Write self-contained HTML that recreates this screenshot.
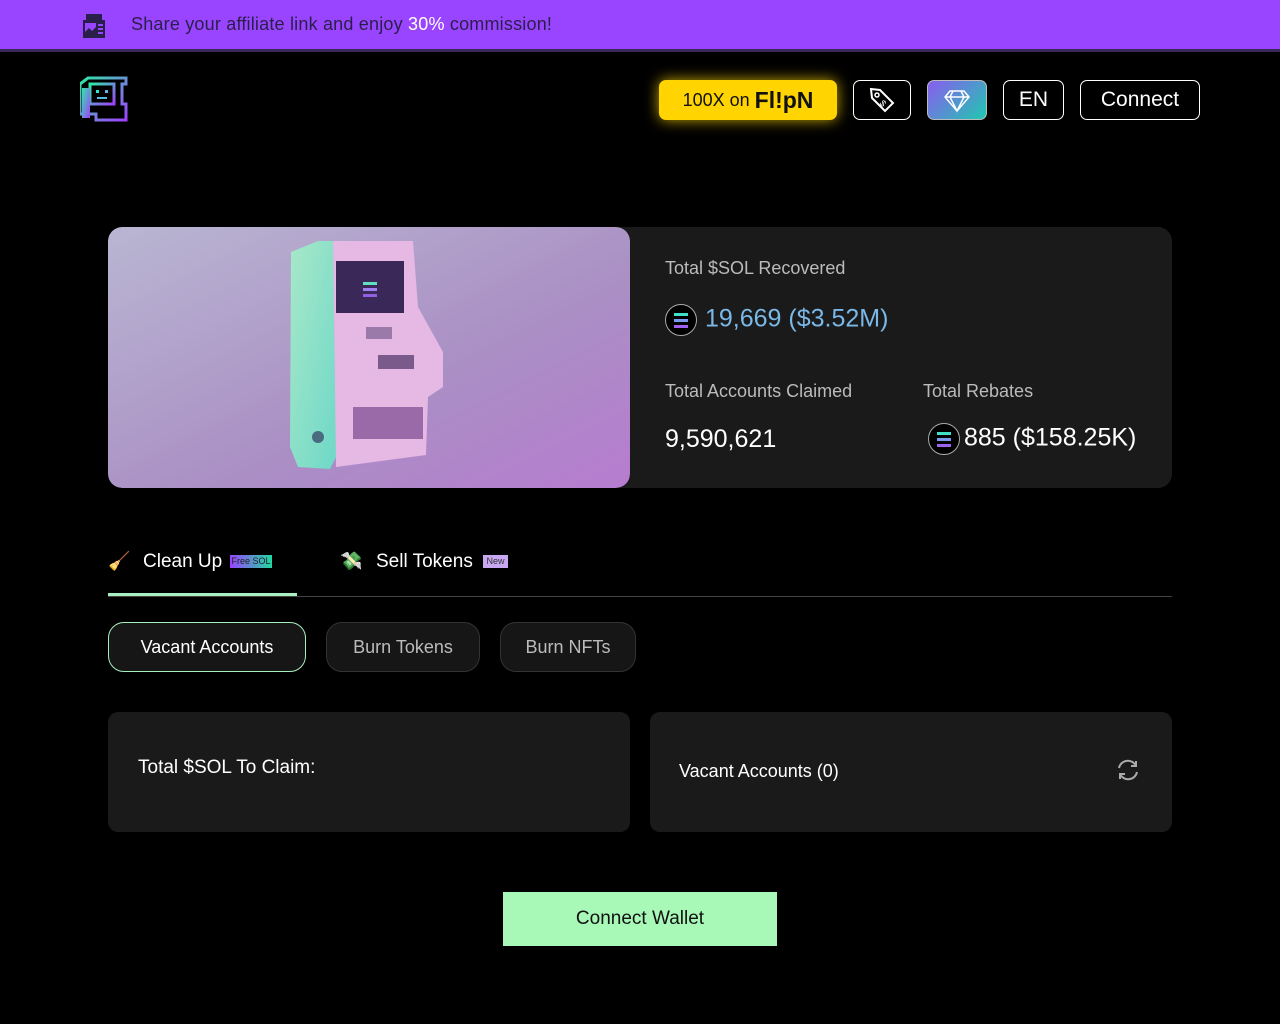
<!DOCTYPE html>
<html><head><meta charset="utf-8"><style>
*{margin:0;padding:0;box-sizing:border-box}
body{width:1280px;height:1024px;background:#000;color:#fff;font-family:"Liberation Sans",sans-serif;position:relative;overflow:hidden}
.abs{position:absolute}
.banner{left:0;top:0;width:1280px;height:52px;background:#9945ff;border-bottom:3px solid #3a2a5a}
.banner span.t{position:absolute;left:131px;top:14px;font-size:18px;color:#2a1f4a;letter-spacing:0.2px}
.btn{position:absolute;top:80px;height:40px;border:1.5px solid #fff;border-radius:7px;display:flex;align-items:center;justify-content:center;font-size:21px}
.card{background:#1a1a1a;border-radius:14px}
.lbl{font-size:18px;color:#bbb}
.pill{position:absolute;top:622px;height:50px;border-radius:16px;background:#161616;border:1px solid #333;display:flex;align-items:center;justify-content:center;font-size:18px;color:#bbb}
.sol{display:inline-block;width:32px;height:32px;border-radius:50%;background:#000;border:1.5px solid #aaa;position:relative;vertical-align:middle}
.sol::before{content:"";position:absolute;left:8px;top:8px;width:14px;height:3px;background:#40e0c8;box-shadow:0 6px 0 #7a9af0,0 12px 0 #a060f0}
</style></head><body>
<div class="abs banner">
<svg class="abs" style="left:80px;top:12px" width="28" height="28" viewBox="0 0 28 28"><rect x="3" y="8" width="22" height="18" fill="#2a1f4a"/><rect x="6" y="2" width="16" height="7" fill="#2a1f4a"/><rect x="5" y="11" width="11" height="12" fill="#9945ff"/><path d="M5 20 L9 16 L12 19 L16 15 L16 23 L5 23Z" fill="#2a1f4a"/><rect x="18" y="12" width="5" height="2" fill="#9945ff"/><rect x="18" y="16" width="5" height="2" fill="#9945ff"/><rect x="18" y="20" width="5" height="2" fill="#9945ff"/></svg>
<span class="t">Share your affiliate link and enjoy <span style="color:#fff">30%</span> commission!</span>
</div>
<svg class="abs" style="left:80px;top:74px" width="48" height="48" viewBox="0 0 48 48"><defs><linearGradient id="lg" x1="0" y1="0" x2="1" y2="1"><stop offset="0" stop-color="#2ee8a8"/><stop offset="1" stop-color="#a040ff"/></linearGradient></defs><path d="M8 4h38v6h-4v20h4v16h-30v-6h-16v-30z" fill="none" stroke="url(#lg)" stroke-width="3"/><rect x="10" y="10" width="24" height="20" fill="none" stroke="url(#lg)" stroke-width="3"/><rect x="2" y="14" width="8" height="30" fill="url(#lg)"/><rect x="16" y="16" width="3" height="3" fill="#2ee8c8"/><rect x="25" y="16" width="3" height="3" fill="#6ab0f0"/><rect x="17" y="23" width="10" height="2" fill="#5ab8e8"/></svg>

<div class="btn" style="left:659px;width:178px;background:#ffd400;border-color:#ffd400;color:#111;box-shadow:0 0 14px #c9a800;font-size:18px">100X on&nbsp;<span style="font-size:23px;font-weight:900">Fl!pN</span></div>
<div class="btn" style="left:853px;width:58px"><svg width="30" height="30" viewBox="0 0 30 30"><path d="M4 4 L13 5 L26 18 L18 26 L5 13Z" fill="none" stroke="#fff" stroke-width="2"/><circle cx="10" cy="10" r="2" fill="none" stroke="#fff" stroke-width="1.5"/><text x="14" y="22" font-size="9" fill="#fff" transform="rotate(45 17 18)">$</text></svg></div>
<div class="btn" style="left:927px;width:60px;background:linear-gradient(135deg,#8a5cf0,#20c8b0);border-color:#bbb"><svg width="28" height="26" viewBox="0 0 28 26"><path d="M7 4h14l5 6-12 14L2 10z M2 10h24 M10 4l-3 6 7 14 7-14-3-6" fill="none" stroke="#fff" stroke-width="1.5"/></svg></div>
<div class="btn" style="left:1003px;width:61px">EN</div>
<div class="btn" style="left:1080px;width:120px">Connect</div>

<div class="abs card" style="left:108px;top:227px;width:1064px;height:261px"></div>
<svg class="abs" style="left:108px;top:227px;border-radius:14px" width="522" height="261" viewBox="0 0 522 261"><defs><linearGradient id="bg" x1="0" y1="0" x2="1" y2="1"><stop offset="0" stop-color="#b9b6d2"/><stop offset="0.6" stop-color="#aa8fc4"/><stop offset="1" stop-color="#b77cd0"/></linearGradient><linearGradient id="side" x1="0" y1="0" x2="1" y2="1"><stop offset="0" stop-color="#a8e8c8"/><stop offset="1" stop-color="#6ed8c8"/></linearGradient></defs><rect width="522" height="261" rx="14" fill="url(#bg)"/><path d="M183 25 L210 14 L225 14 L228 230 L222 242 L190 240 L182 220Z" fill="url(#side)"/><path d="M210 14 L305 14 L310 80 L335 125 L335 160 L320 170 L318 228 L228 240 L225 14Z" fill="#e6b8e4"/><rect x="228" y="34" width="68" height="52" fill="#3a2858"/><rect x="255" y="55" width="14" height="3" fill="#60e0c0"/><rect x="255" y="61" width="14" height="3" fill="#a080f0"/><rect x="255" y="67" width="14" height="3" fill="#9060e0"/><rect x="258" y="100" width="26" height="12" fill="#9a7aa8"/><rect x="270" y="128" width="36" height="14" fill="#7a5a8a"/><rect x="245" y="180" width="70" height="32" fill="#9a6aa8"/><circle cx="210" cy="210" r="6" fill="#4a6a80"/></svg>

<div class="abs lbl" style="left:665px;top:258px">Total $SOL Recovered</div>
<div class="abs" style="left:665px;top:304px;font-size:25px;color:#7ab8e8"><span class="sol" style="margin-right:8px"></span>19,669 ($3.52M)</div>
<div class="abs lbl" style="left:665px;top:381px">Total Accounts Claimed</div>
<div class="abs lbl" style="left:923px;top:381px">Total Rebates</div>
<div class="abs" style="left:665px;top:425px;font-size:25px">9,590,621</div>
<div class="abs" style="left:928px;top:423px;font-size:25px"><span class="sol" style="margin-right:4px"></span>885 ($158.25K)</div>

<div class="abs" style="left:108px;top:551px;font-size:18px">🧹</div>
<div class="abs" style="left:143px;top:551px;font-size:19px">Clean Up</div>
<div class="abs" style="left:230px;top:555px;width:42px;height:13px;background:linear-gradient(90deg,#9945ff,#20d8a0);font-size:9px;color:#222;text-align:center;line-height:13px">Free SOL</div>
<div class="abs" style="left:340px;top:551px;font-size:18px">💸</div>
<div class="abs" style="left:376px;top:551px;font-size:19px">Sell Tokens</div>
<div class="abs" style="left:483px;top:555px;width:25px;height:13px;background:#c8a8f0;font-size:9px;color:#333;text-align:center;line-height:13px">New</div>
<div class="abs" style="left:108px;top:596px;width:1064px;height:1px;background:#444"></div>
<div class="abs" style="left:108px;top:593px;width:189px;height:3px;background:#a8f0c0"></div>

<div class="pill" style="left:108px;width:198px;border-color:#a8f0c0;color:#fff">Vacant Accounts</div>
<div class="pill" style="left:326px;width:154px">Burn Tokens</div>
<div class="pill" style="left:500px;width:136px">Burn NFTs</div>

<div class="abs card" style="left:108px;top:712px;width:522px;height:120px;border-radius:10px"></div>
<div class="abs" style="left:138px;top:757px;font-size:19px">Total $SOL To Claim:</div>
<div class="abs card" style="left:650px;top:712px;width:522px;height:120px;border-radius:10px"></div>
<div class="abs" style="left:679px;top:761px;font-size:18px">Vacant Accounts (0)</div>
<svg class="abs" style="left:1115px;top:758px" width="26" height="24" viewBox="0 0 26 24"><path d="M4 10 A9 9 0 0 1 21 8 M22 14 A9 9 0 0 1 5 16" fill="none" stroke="#aaa" stroke-width="2"/><path d="M21 3 V8 H16 M5 21 V16 H10" fill="none" stroke="#aaa" stroke-width="2"/></svg>

<div class="abs" style="left:503px;top:892px;width:274px;height:54px;background:#a8f8b8;color:#111;font-size:19px;display:flex;align-items:center;justify-content:center">Connect Wallet</div>
</body></html>
